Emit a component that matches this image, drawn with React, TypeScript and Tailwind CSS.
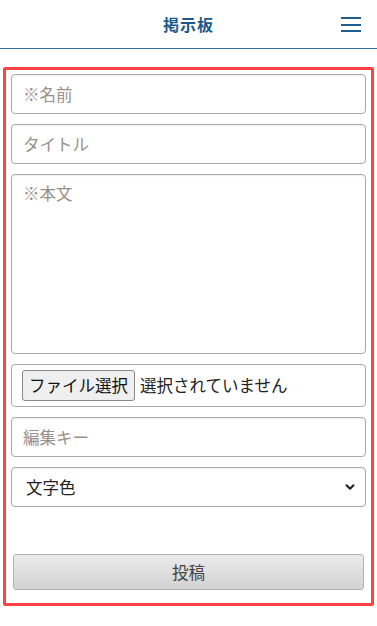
import { ChevronDown } from "lucide-react";

const font = { fontFamily: '"Noto Sans CJK JP", "Noto Sans", sans-serif' };

function TextField({ placeholder }: { placeholder: string }) {
  return (
    <input
      type="text"
      placeholder={placeholder}
      className="h-[40px] w-full rounded-[4px] border border-[#aaaaaa] bg-white px-[11px] text-[16.5px] text-[#333] outline-none shadow-[inset_0_1px_2px_rgba(0,0,0,0.06)] placeholder:text-[#9a8f8a]"
    />
  );
}

export default function App() {
  return (
    <div className="min-h-[626px] bg-white" style={font}>
      {/* ヘッダー */}
      <header className="relative flex h-[49px] items-center justify-center border-b border-[#2e6f9e]">
        <h1 className="text-[16px] font-bold tracking-[1px] text-[#1d5a8a]">掲示板</h1>
        <button className="absolute right-[16px] top-[17px] flex w-[20px] flex-col gap-[4.5px]">
          <span className="block h-[2px] w-full bg-[#1f5f8f]" />
          <span className="block h-[2px] w-full bg-[#1f5f8f]" />
          <span className="block h-[2px] w-full bg-[#1f5f8f]" />
        </button>
      </header>

      {/* 投稿フォーム */}
      <form className="mx-[3px] mt-[18px] flex flex-col rounded-[2px] border-[3px] border-[#ff4343] px-[5px] pb-[13px] pt-[4px]">
        <div className="flex flex-col gap-[10px]">
          <TextField placeholder="※名前" />
          <TextField placeholder="タイトル" />
          <textarea
            placeholder="※本文"
            className="h-[180px] w-full resize-none rounded-[4px] border border-[#aaaaaa] bg-white px-[11px] py-[6px] text-[16.5px] text-[#333] outline-none shadow-[inset_0_1px_2px_rgba(0,0,0,0.06)] placeholder:text-[#9a8f8a]"
          />
          <div className="flex h-[43px] items-center gap-[5px] rounded-[4px] border border-[#aaaaaa] bg-white px-[10px]">
            <button
              type="button"
              className="h-[31px] rounded-[3px] border border-[#8a8a8a] bg-[#efefef] px-[6px] text-[16.5px] text-[#111]"
            >
              ファイル選択
            </button>
            <span className="text-[16.5px] text-[#222]">選択されていません</span>
          </div>
          <TextField placeholder="編集キー" />
          <div className="flex h-[40px] items-center justify-between rounded-[4px] border border-[#aaaaaa] bg-white pl-[14px] pr-[8px] shadow-[inset_0_1px_2px_rgba(0,0,0,0.06)]">
            <span className="text-[16.5px] text-[#222]">文字色</span>
            <ChevronDown className="h-[14px] w-[14px] text-[#222]" strokeWidth={3.5} />
          </div>
        </div>

        <button
          type="button"
          className="mx-[2px] mt-[47px] h-[36px] rounded-[3px] border border-[#b3b3b3] bg-gradient-to-b from-[#ebebeb] to-[#d2d2d2] text-[16.5px] text-[#444]"
        >
          投稿
        </button>
      </form>
    </div>
  );
}
